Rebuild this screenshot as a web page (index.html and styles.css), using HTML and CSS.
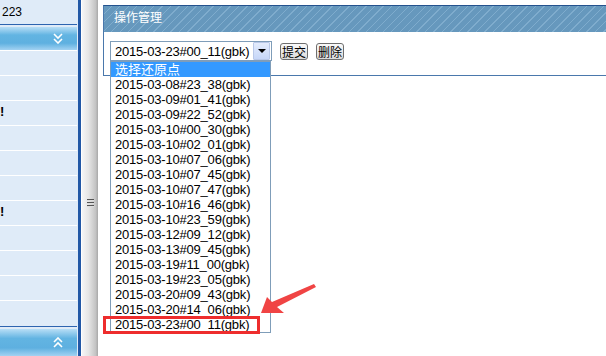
FILE: index.html
```html
<!DOCTYPE html>
<html lang="zh-CN">
<head>
  <meta charset="UTF-8" />
  <title>操作管理</title>
  <link rel="stylesheet" href="styles.css">
</head>
<body>
  <div class="frame">
    <!-- left menu -->
    <div class="sidebar">
      <div class="side-top">223</div>
      <div class="side-bar">
        <svg width="10" height="11" viewBox="0 0 10 11"><polyline points="1,1 5,5 9,1" /><polyline points="1,6 5,10 9,6" /></svg>
      </div>
      <div class="side-list">
        <div class="side-row"></div>
        <div class="side-row"></div>
        <div class="side-row"><span class="cut">!</span></div>
        <div class="side-row"></div>
        <div class="side-row"></div>
        <div class="side-row"></div>
        <div class="side-row"><span class="cut">!</span></div>
        <div class="side-row"></div>
        <div class="side-row"></div>
        <div class="side-row"></div>
        <div class="side-row"></div>
      </div>
      <div class="side-bottom">
        <div class="side-bar">
          <svg width="10" height="11" viewBox="0 0 10 11"><polyline points="1,5 5,1 9,5" /><polyline points="1,10 5,6 9,10" /></svg>
        </div>
      </div>
    </div>

    <!-- splitter -->
    <div class="splitter">
      <div class="grip"><i></i><i></i><i></i></div>
    </div>

    <!-- content -->
    <div class="main">
      <div class="panel">
        <div class="panel-head">操作管理</div>
        <div class="panel-body">
          <div class="combo">
            <div class="combo-box">
              <span class="combo-text">2015-03-23#00_11(gbk)</span>
              <span class="combo-btn"></span>
            </div>
            <ul class="combo-list">
              <li class="selected">选择还原点</li>
              <li>2015-03-08#23_38(gbk)</li>
              <li>2015-03-09#01_41(gbk)</li>
              <li>2015-03-09#22_52(gbk)</li>
              <li>2015-03-10#00_30(gbk)</li>
              <li>2015-03-10#02_01(gbk)</li>
              <li>2015-03-10#07_06(gbk)</li>
              <li>2015-03-10#07_45(gbk)</li>
              <li>2015-03-10#07_47(gbk)</li>
              <li>2015-03-10#16_46(gbk)</li>
              <li>2015-03-10#23_59(gbk)</li>
              <li>2015-03-12#09_12(gbk)</li>
              <li>2015-03-13#09_45(gbk)</li>
              <li>2015-03-19#11_00(gbk)</li>
              <li>2015-03-19#23_05(gbk)</li>
              <li>2015-03-20#09_43(gbk)</li>
              <li>2015-03-20#14_06(gbk)</li>
              <li>2015-03-23#00_11(gbk)</li>
            </ul>
          </div>
          <button class="btn">提交</button>
          <button class="btn">删除</button>
        </div>
      </div>
    </div>
  </div>

  <!-- annotation -->
  <div class="mark"></div>
  <svg class="arrow" width="606" height="356" viewBox="0 0 606 356">
    <polygon points="261,313 267,297 272,302 314,284 316,287 277,307 284,313" />
  </svg>
</body>
</html>
```

FILE: styles.css
```css
body {
  margin: 0;
  width: 606px;
  height: 356px;
  overflow: hidden;
  background: #fff;
  font-family: "Liberation Sans", "Noto Sans CJK SC", sans-serif;
  font-size: 13px;
  color: #000;
}

.frame {
  display: flex;
  height: 356px;
}

/* sidebar */
.sidebar {
  width: 77px;
  padding-right: 1px;
  border-right: 3px solid #2258a6;
  background: #dfebf8;
  display: flex;
  flex-direction: column;
  overflow: hidden;
}

.side-top {
  height: 24px;
  line-height: 24px;
  padding-left: 2px;
  font-size: 12px;
  border-bottom: 1px solid #2d64b0;
}

.side-bar {
  height: 27px;
  margin-top: 2px;
  background: linear-gradient(#b8def6, #62b4e2 35%, #5eb0e0 70%, #a2d2f2);
  display: flex;
  align-items: center;
  justify-content: flex-end;
  padding-right: 14px;
}

.side-bar svg polyline {
  fill: none;
  stroke: #fff;
  stroke-width: 1.6;
}

.side-list {
  height: 275px;
}

.side-row {
  height: 24px;
  border-top: 1px solid #fff;
  font-size: 13px;
  line-height: 22px;
  font-weight: bold;
}

.cut {
  margin-left: 0;
}

.side-bottom {
  margin-top: 1px;
  border-top: 1px solid #2d64b0;
}

/* splitter */
.splitter {
  width: 16px;
  margin-left: 1px;
  background: linear-gradient(90deg, #f6f6f6, #e6e6e6 40%, #c4c4c4 85%, #a8a8a8);
  display: flex;
  align-items: center;
  justify-content: center;
}

.grip {
  display: flex;
  flex-direction: column;
  gap: 1px;
  margin-top: 50px;
}

.grip i {
  display: block;
  width: 7px;
  height: 1px;
  background: #555;
  border-bottom: 1px solid #ddd;
}

/* main */
.main {
  flex: 1;
  padding: 5px 0 0 5px;
  overflow: hidden;
}

.panel {
  margin-right: -2px;
  border: 1px solid #4a78ac;
  border-top-color: #24528e;
  height: 69px;
}

.panel-head {
  height: 26px;
  line-height: 25px;
  padding-left: 10px;
  font-size: 12px;
  color: #fff;
  background: repeating-linear-gradient(135deg, #6698bd 0 5px, #7faccd 5px 6px);
}

.panel-body {
  display: flex;
  align-items: center;
  gap: 8px;
  padding: 9px 0 0 6px;
}

.combo {
  position: relative;
}

.combo-box {
  width: 160px;
  height: 18px;
  border: 1px solid #7f9db9;
  display: flex;
  align-items: center;
  justify-content: space-between;
  background: #fff;
}

.combo-text {
  padding-left: 4px;
  letter-spacing: -0.2px;
}

.combo-btn {
  width: 15px;
  height: 16px;
  margin-right: 1px;
  border: 1px solid #b9c8e8;
  border-radius: 1px;
  background: linear-gradient(#e4ecfc, #c6d6f8);
  position: relative;
}

.combo-btn::after {
  content: "";
  position: absolute;
  left: 4px;
  top: 6px;
  border-left: 4px solid transparent;
  border-right: 4px solid transparent;
  border-top: 4px solid #000;
}

.combo-list {
  position: absolute;
  left: 0;
  top: 20px;
  width: 159px;
  margin: 0;
  padding: 0;
  list-style: none;
  border: 1px solid #7f9db9;
  background: #fff;
}

.combo-list li {
  height: 15px;
  line-height: 15px;
  padding-left: 4px;
  letter-spacing: -0.2px;
  white-space: nowrap;
}

.combo-list li.selected {
  background: #3399ff;
  color: #fff;
  letter-spacing: 0;
}

.btn {
  height: 17px;
  padding: 0 1px;
  font-family: "Noto Sans CJK SC", sans-serif;
  font-size: 12px;
  line-height: 15px;
  border: 1px solid #6e6e6e;
  border-radius: 3px;
  background: linear-gradient(#fafafa, #dadada);
  color: #000;
}

/* red annotation */
.mark {
  position: absolute;
  left: 103px;
  top: 316px;
  width: 151px;
  height: 12px;
  border: 3px solid #ee2d2d;
}

.arrow {
  position: absolute;
  left: 0;
  top: 0;
}

.arrow polygon {
  fill: #f04444;
}
```
